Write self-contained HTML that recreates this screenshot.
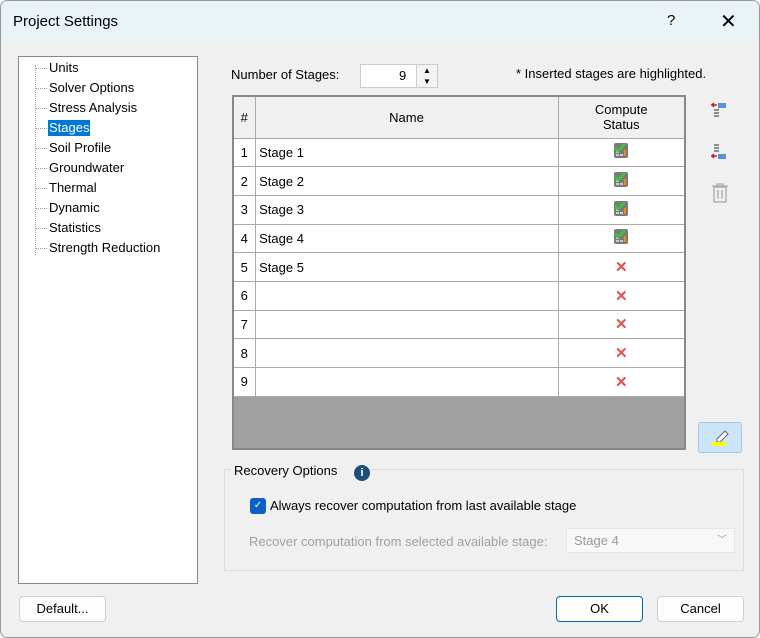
<!DOCTYPE html>
<html><head><style>
*{box-sizing:border-box;margin:0;padding:0}
body{width:760px;height:638px;background:#fff;font-family:"Liberation Sans",sans-serif;font-size:13px;color:#000;position:relative;overflow:hidden}
.a{position:absolute}
.win{left:0;top:0;width:760px;height:638px;background:#f0f0f0;border:1px solid #999;border-radius:7px;overflow:hidden}
.title{left:0;top:0;width:760px;height:41px;background:#eaf4f8}
.tree{left:17px;top:55px;width:180px;height:528px;background:#fff;border:1px solid #828790}
.ti{position:absolute;left:29px;font-size:13px;line-height:16px;padding:0 1px}
.dl{position:absolute;left:17px;border-top:1px dotted #999;width:11px}
table{border-collapse:collapse;position:absolute;left:231px;top:94px;width:454px;background:#a0a0a0;border:2px solid #888;table-layout:fixed}
td,th{border:1px solid #aaa;font-weight:normal;height:28.7px;padding:0;background:#fff;font-size:13px}
th{background:#f0f0f0;height:42px}
.n{text-align:center;width:22px}
.c{text-align:center;width:127px}
.x{color:#e05050;font-size:15px;font-weight:bold}
.btn{background:#fdfdfd;border:1px solid #d0d0d0;border-radius:4px;text-align:center;line-height:23px;font-size:13px}
</style></head><body>
<div class="a win">
<div class="a title"></div>
<div class="a" style="left:12px;top:12px;font-size:15px">Project Settings</div>
<div class="a" style="left:666px;top:11px;font-size:15px">?</div>
<div class="a" style="left:719px;top:8px;font-size:20px;font-weight:300">✕</div>

<div class="a tree">
<div class="a" style="left:16px;top:8px;height:190px;border-left:1px dotted #999"></div>
<div class="dl" style="top:11px"></div><div class="ti" style="top:3px">Units</div>
<div class="dl" style="top:31px"></div><div class="ti" style="top:23px">Solver Options</div>
<div class="dl" style="top:51px"></div><div class="ti" style="top:43px">Stress Analysis</div>
<div class="dl" style="top:71px"></div><div class="ti" style="top:63px;background:#0078d7;color:#fff">Stages</div>
<div class="dl" style="top:91px"></div><div class="ti" style="top:83px">Soil Profile</div>
<div class="dl" style="top:111px"></div><div class="ti" style="top:103px">Groundwater</div>
<div class="dl" style="top:131px"></div><div class="ti" style="top:123px">Thermal</div>
<div class="dl" style="top:151px"></div><div class="ti" style="top:143px">Dynamic</div>
<div class="dl" style="top:171px"></div><div class="ti" style="top:163px">Statistics</div>
<div class="dl" style="top:191px"></div><div class="ti" style="top:183px">Strength Reduction</div>
</div>

<div class="a" style="left:230px;top:66px">Number of Stages:</div>
<div class="a" style="left:359px;top:63px;width:78px;height:24px;background:#fff;border:1px solid #ccc"></div>
<div class="a" style="left:398px;top:67px">9</div>
<div class="a" style="left:415px;top:64px;width:21px;height:22px;border-left:1px solid #ccc;background:#f4f4f4;font-size:8px;text-align:center;line-height:11px">▲<br>▼</div>
<div class="a" style="left:515px;top:65px">* Inserted stages are highlighted.</div>

<table>
<tr><th class="n">#</th><th>Name</th><th class="c">Compute<br>Status</th></tr>
<tr><td class="n">1</td><td>&nbsp;Stage 1</td><td class="c"><svg width="16" height="17"><rect x="1" y="1" width="14" height="15" rx="2" fill="#7a7a7a"/><rect x="3" y="9" width="3" height="2" fill="#ccc"/><rect x="3" y="12" width="3" height="2" fill="#ccc"/><rect x="7" y="12" width="3" height="2" fill="#ccc"/><rect x="11" y="8" width="2" height="6" fill="#f08a20"/><path d="M2 6l3 3 7-7" stroke="#3c3" stroke-width="2.5" fill="none"/></svg></td></tr>
<tr><td class="n">2</td><td>&nbsp;Stage 2</td><td class="c"><svg width="16" height="17"><rect x="1" y="1" width="14" height="15" rx="2" fill="#7a7a7a"/><rect x="3" y="9" width="3" height="2" fill="#ccc"/><rect x="3" y="12" width="3" height="2" fill="#ccc"/><rect x="7" y="12" width="3" height="2" fill="#ccc"/><rect x="11" y="8" width="2" height="6" fill="#f08a20"/><path d="M2 6l3 3 7-7" stroke="#3c3" stroke-width="2.5" fill="none"/></svg></td></tr>
<tr><td class="n">3</td><td>&nbsp;Stage 3</td><td class="c"><svg width="16" height="17"><rect x="1" y="1" width="14" height="15" rx="2" fill="#7a7a7a"/><rect x="3" y="9" width="3" height="2" fill="#ccc"/><rect x="3" y="12" width="3" height="2" fill="#ccc"/><rect x="7" y="12" width="3" height="2" fill="#ccc"/><rect x="11" y="8" width="2" height="6" fill="#f08a20"/><path d="M2 6l3 3 7-7" stroke="#3c3" stroke-width="2.5" fill="none"/></svg></td></tr>
<tr><td class="n">4</td><td>&nbsp;Stage 4</td><td class="c"><svg width="16" height="17"><rect x="1" y="1" width="14" height="15" rx="2" fill="#7a7a7a"/><rect x="3" y="9" width="3" height="2" fill="#ccc"/><rect x="3" y="12" width="3" height="2" fill="#ccc"/><rect x="7" y="12" width="3" height="2" fill="#ccc"/><rect x="11" y="8" width="2" height="6" fill="#f08a20"/><path d="M2 6l3 3 7-7" stroke="#3c3" stroke-width="2.5" fill="none"/></svg></td></tr>
<tr><td class="n">5</td><td>&nbsp;Stage 5</td><td class="c x">✕</td></tr>
<tr><td class="n">6</td><td></td><td class="c x">✕</td></tr>
<tr><td class="n">7</td><td></td><td class="c x">✕</td></tr>
<tr><td class="n">8</td><td></td><td class="c x">✕</td></tr>
<tr><td class="n">9</td><td></td><td class="c x">✕</td></tr>
<tr><td colspan="3" style="height:53px;background:#a0a0a0;border:none"></td></tr>
</table>

<svg class="a" style="left:709px;top:100px" width="18" height="18"><rect x="8" y="2" width="8" height="5" fill="#5b8fd8"/><path d="M1 4h6M4 2l-2 2 2 2" stroke="#b22" stroke-width="1.5" fill="none"/><path d="M4 9h5M4 12h5M4 15h5" stroke="#456" stroke-width="1.3"/></svg>
<svg class="a" style="left:709px;top:142px" width="18" height="18"><path d="M4 2h5M4 5h5M4 8h5" stroke="#456" stroke-width="1.3"/><rect x="8" y="11" width="8" height="5" fill="#5b8fd8"/><path d="M1 13h6M4 11l-2 2 2 2" stroke="#b22" stroke-width="1.5" fill="none"/></svg>
<svg class="a" style="left:710px;top:182px" width="18" height="20"><path d="M1 3h16M6 3V1h6v2" stroke="#aaa" stroke-width="1.3" fill="none"/><rect x="3" y="4" width="12" height="15" fill="none" stroke="#aaa" stroke-width="1.3"/><path d="M7 7v9M11 7v9" stroke="#aaa" stroke-width="1.3"/></svg>
<div class="a" style="left:697px;top:421px;width:44px;height:31px;background:#cce4f7;border:1px solid #99c9ef;border-radius:3px"></div>
<svg class="a" style="left:708px;top:426px" width="22" height="20"><path d="M8 12l8-8 3 3-8 8H8z" fill="#fff" stroke="#666"/><rect x="3" y="15" width="14" height="4" fill="#ff0"/></svg>

<div class="a" style="left:223px;top:468px;width:520px;height:102px;border:1px solid #dcdcdc"></div>
<div class="a" style="left:230px;top:462px;padding:0 3px;background:#f0f0f0">Recovery Options &nbsp;&nbsp;&nbsp;&nbsp;&nbsp;&nbsp;</div>
<div class="a" style="left:353px;top:464px;width:16px;height:16px;border-radius:50%;background:#1d4f7c;color:#fff;font-size:11px;font-weight:bold;text-align:center;line-height:16px">i</div>
<div class="a" style="left:249px;top:497px;width:16px;height:16px;border-radius:3px;background:#0a60c8;color:#fff;font-size:10px;text-align:center;line-height:16px">✓</div>
<div class="a" style="left:269px;top:497px">Always recover computation from last available stage</div>
<div class="a" style="left:248px;top:533px;color:#a0a0a0">Recover computation from selected available stage:</div>
<div class="a" style="left:565px;top:527px;width:169px;height:25px;background:#f8f8f8;border:1px solid #e6e6e6;color:#999;line-height:23px;padding-left:7px">Stage 4<span style="position:absolute;right:7px;top:0;font-size:10px">﹀</span></div>

<div class="a btn" style="left:18px;top:595px;width:87px;height:26px">Default...</div>
<div class="a btn" style="left:555px;top:595px;width:87px;height:26px;border:1px solid #0067c0">OK</div>
<div class="a btn" style="left:656px;top:595px;width:87px;height:26px">Cancel</div>
</div>
</body></html>
